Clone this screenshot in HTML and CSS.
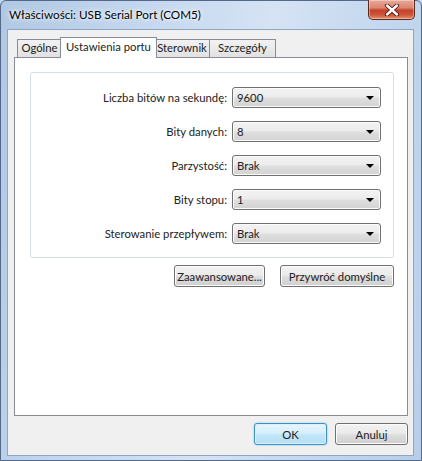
FILE: index.html
```html
<!DOCTYPE html>
<html lang="pl">
<head>
  <meta charset="UTF-8" />
  <meta name="viewport" content="width=device-width, initial-scale=1.0"/>
  <title>Właściwości: USB Serial Port (COM5)</title>
  <link rel="stylesheet" href="styles.css">
</head>
<body>
  <div class="window">
    <div class="titlebar">
      <span class="title">Właściwości: USB Serial Port (COM5)</span>
      <button class="close-btn" title="Zamknij">
        <svg width="16" height="12" viewBox="0 0 16 12">
          <path d="M3 1.5 L13 10.5 M13 1.5 L3 10.5" stroke="#4a1410" stroke-width="4.2" stroke-linecap="round"/>
          <path d="M3 1.5 L13 10.5 M13 1.5 L3 10.5" stroke="#fff" stroke-width="2.4" stroke-linecap="round"/>
        </svg>
      </button>
    </div>

    <div class="client">
      <div class="tabs">
        <div class="tab tab-general">Ogólne</div>
        <div class="tab tab-port active">Ustawienia portu</div>
        <div class="tab tab-driver">Sterownik</div>
        <div class="tab tab-details">Szczegóły</div>
      </div>

      <div class="panel">
        <div class="group">
          <label class="field-label">Liczba bitów na sekundę:</label>
          <div class="combo"><span>9600</span><i class="arrow"></i></div>

          <label class="field-label">Bity danych:</label>
          <div class="combo"><span>8</span><i class="arrow"></i></div>

          <label class="field-label">Parzystość:</label>
          <div class="combo"><span>Brak</span><i class="arrow"></i></div>

          <label class="field-label">Bity stopu:</label>
          <div class="combo"><span>1</span><i class="arrow"></i></div>

          <label class="field-label">Sterowanie przepływem:</label>
          <div class="combo"><span>Brak</span><i class="arrow"></i></div>
        </div>

        <div class="panel-actions">
          <button class="btn btn-advanced">Zaawansowane...</button>
          <button class="btn btn-defaults">Przywróć domyślne</button>
        </div>
      </div>

      <div class="dialog-actions">
        <button class="btn btn-ok default">OK</button>
        <button class="btn btn-cancel">Anuluj</button>
      </div>
    </div>
  </div>
</body>
</html>
```

FILE: styles.css
```css
body {
  margin: 0;
  background: #c6d8ee;
  font-family: Lato, "Open Sans", sans-serif;
  font-size: 11.3px;
  color: #222;
}

.window {
  box-sizing: border-box;
  width: 422px;
  height: 461px;
  border: 1px solid #54698a;
  border-radius: 6px 6px 0 0;
  background: linear-gradient(100deg, #b0c8e3 0%, #c5d8ef 30%, #d5e3f4 55%, #c2d6ee 80%, #b8cee8 100%);
  display: flex;
  flex-direction: column;
}

.titlebar {
  height: 28px;
  display: flex;
  align-items: flex-start;
  justify-content: space-between;
}

.title {
  margin: 6px 0 0 8px;
  font-size: 11.7px;
  color: #000;
  text-shadow: 0 0 6px #fff, 0 0 3px #fff;
}

.close-btn {
  width: 47px;
  height: 20px;
  margin: -1px 6px 0 0;
  padding: 0;
  border: 1px solid #5a2a22;
  border-top: none;
  border-radius: 0 0 5px 5px;
  background: linear-gradient(#e9a99a 0%, #dc8771 40%, #c4412a 55%, #cf5a3c 80%, #e4926f 100%);
  box-shadow: inset 0 0 0 1px rgba(255,255,255,0.35);
  display: flex;
  align-items: center;
  justify-content: center;
}

.client {
  margin: 0 7px 4px 6px;
  height: 425px;
  border: 1px solid #8ea6c4;
  background: #f0f0f0;
}

.tabs {
  display: flex;
  align-items: flex-end;
  height: 20px;
  margin: 7px 0 0 9px;
  position: relative;
  z-index: 1;
}

.tab {
  box-sizing: border-box;
  height: 18px;
  border: 1px solid #898c95;
  border-bottom: none;
  background: linear-gradient(#f2f2f2, #e1e1e1);
  text-align: center;
  line-height: 16px;
  white-space: nowrap;
}

.tab + .tab {
  margin-left: -1px;
}

.tab-general { width: 45px; }
.tab-driver { width: 56px; }
.tab-details { width: 67px; }

.tab.active {
  width: 97px;
  height: 21px;
  margin: 0 -2px -1px -2px;
  background: #fff;
  line-height: 17px;
  position: relative;
  z-index: 2;
}

.panel {
  box-sizing: border-box;
  width: 394px;
  height: 359px;
  margin-left: 6px;
  border: 1px solid #898c95;
  background: #fff;
}

.group {
  box-sizing: border-box;
  width: 364px;
  height: 186px;
  margin: 14px 0 0 15px;
  padding: 14px 12px 0 0;
  border: 1px solid #d5dfe5;
  border-radius: 3px;
  display: grid;
  grid-template-columns: 1fr 149px;
  grid-auto-rows: 21px;
  column-gap: 5px;
  row-gap: 13px;
}

.field-label {
  text-align: right;
  line-height: 21px;
  white-space: nowrap;
}

.combo {
  box-sizing: border-box;
  height: 21px;
  border: 1px solid #707070;
  border-radius: 3px;
  background: linear-gradient(#f3f3f3 0%, #ececec 45%, #dedede 55%, #d3d3d3 100%);
  box-shadow: inset 0 0 0 1px #fbfbfb;
  display: flex;
  align-items: center;
  justify-content: space-between;
  padding: 0 6px 0 4px;
}

.arrow {
  width: 0;
  height: 0;
  border-left: 4px solid transparent;
  border-right: 4px solid transparent;
  border-top: 4px solid #000;
}

.panel-actions {
  display: flex;
  justify-content: flex-end;
  gap: 15px;
  margin-top: 7px;
  padding-right: 13px;
}

.btn {
  box-sizing: border-box;
  height: 22px;
  padding: 0;
  border: 1px solid #707070;
  border-radius: 3px;
  background: linear-gradient(#f2f2f2 0%, #ebebeb 45%, #dddddd 55%, #cfcfcf 100%);
  box-shadow: inset 0 0 0 1px #fcfcfc;
  font-family: inherit;
  font-size: 11.3px;
  color: #222;
}

.btn-advanced { width: 91px; }
.btn-defaults { width: 114px; }

.dialog-actions {
  display: flex;
  justify-content: flex-end;
  gap: 8px;
  margin: 7px 5px 0 0;
}

.btn-ok,
.btn-cancel {
  width: 73px;
}

.btn.default {
  border-color: #3d8fc4;
  background: linear-gradient(#e6f5fd 0%, #d6effc 45%, #c2e6f9 55%, #b4def5 100%);
  box-shadow: inset 0 0 0 1px #d8f3ff, 0 0 2px #7cc4ec;
}
```
